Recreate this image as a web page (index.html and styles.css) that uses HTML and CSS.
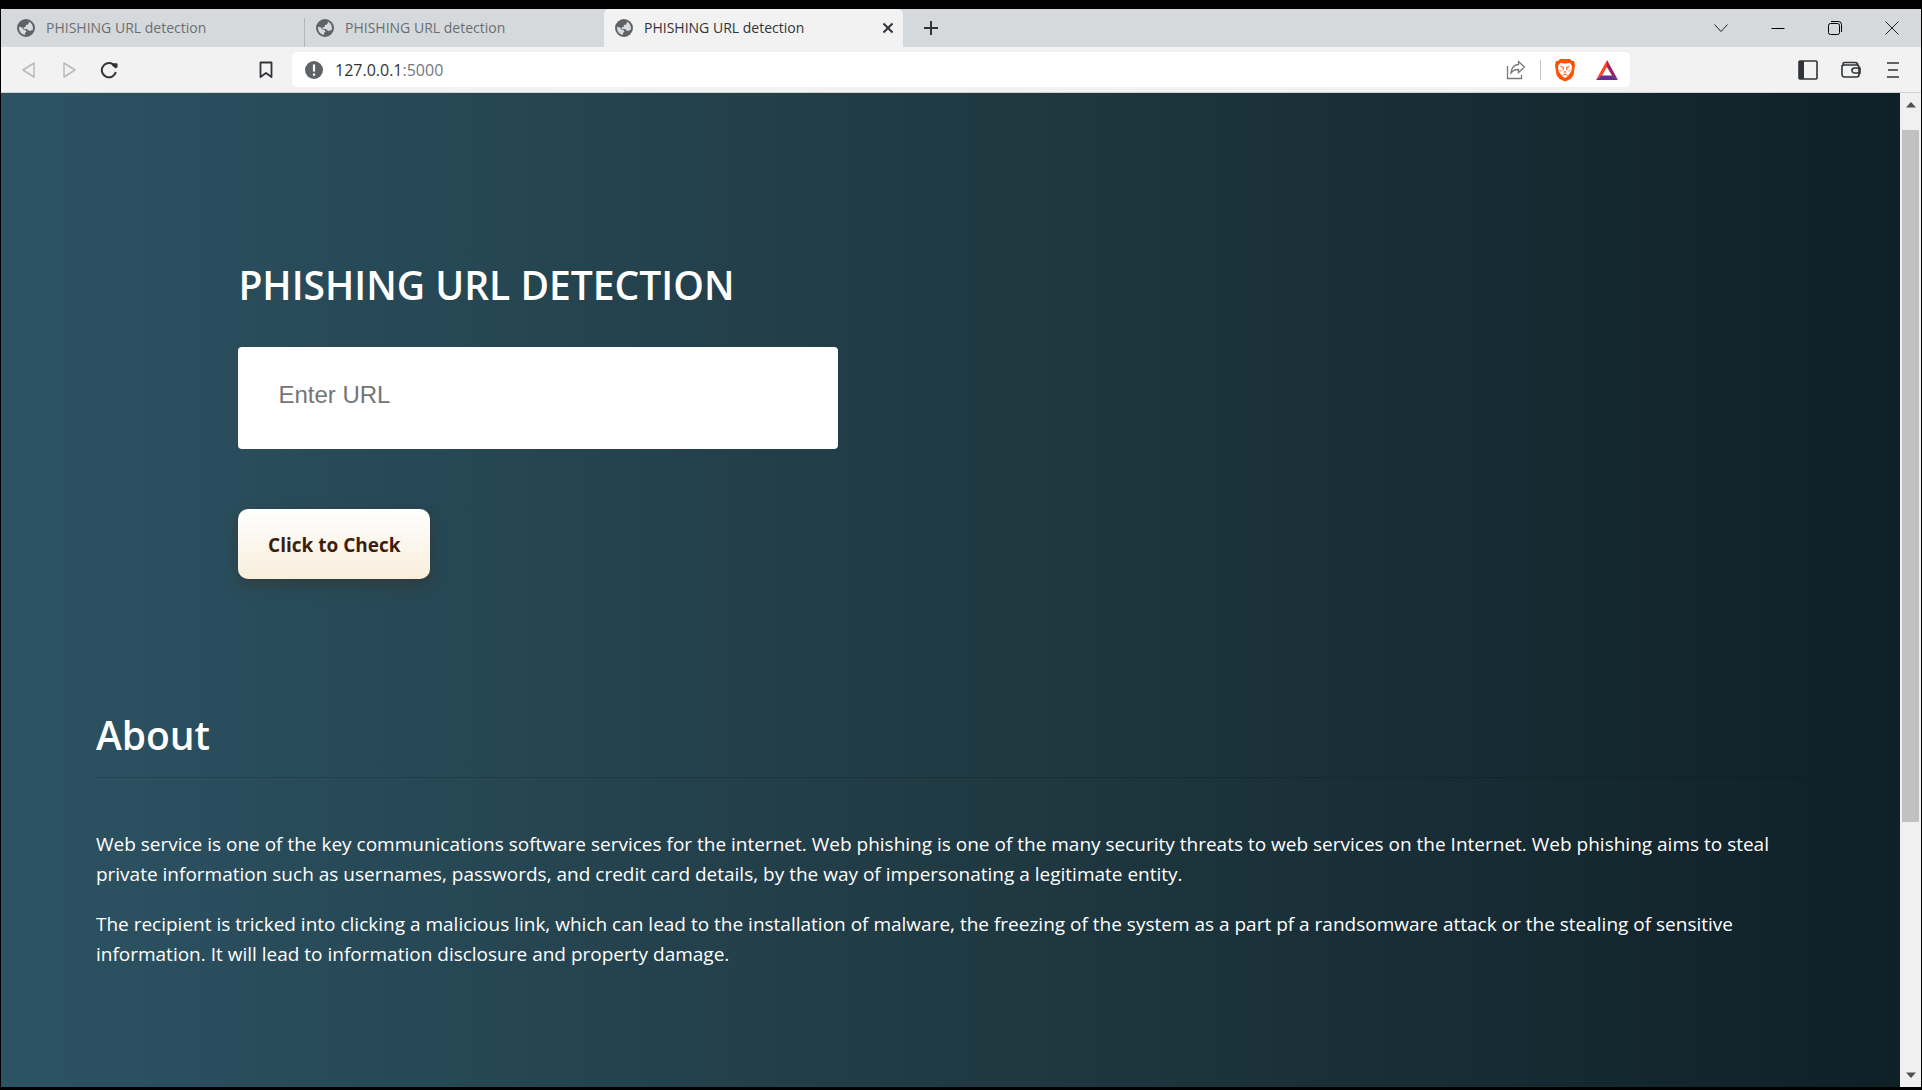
FILE: index.html
```html
<!DOCTYPE html>
<html lang="en">
<head>
<meta charset="utf-8">
<title>PHISHING URL detection</title>
<link rel="stylesheet" href="styles.css">
</head>
<body>
<svg width="0" height="0" class="defs" aria-hidden="true">
  <symbol id="globe" viewBox="0 0 18 18"><circle cx="9" cy="9" r="8" fill="#d9dcdf" stroke="#5f6368" stroke-width="2"/><path fill="#5f6368" d="M9 1h2.500l.5 2.500-1 2-2 .5-.5 2-2 .5.5 1.500h3l1.500 1.500L13 12l2-1 1.500.5-2 3.500L10 17l-2-.5V14l1.500-1.500-1-1.500-2-.5L5 8.500l-3.500-1L1 9l1 4 3 3-3-3-1-4 1.500-4.500L6 1.500z"/></symbol>
</svg>
<div class="window">
  <header>
    <nav class="tabs" aria-label="Tabs">
      <a class="tab" href="#"><svg class="favicon"><use href="#globe"/></svg>PHISHING URL detection</a>
      <a class="tab divided" href="#"><svg class="favicon"><use href="#globe"/></svg>PHISHING URL detection</a>
      <div class="tab active"><svg class="favicon"><use href="#globe"/></svg><a href="#">PHISHING URL detection</a>
        <button class="close" aria-label="Close tab"><svg width="12" height="12" viewBox="0 0 12 12"><path d="M1.500 1.500l9 9M10.500 1.500l-9 9" stroke="#303438" stroke-width="2"/></svg></button></div>
      <button class="new-tab" aria-label="New tab"><svg width="16" height="16" viewBox="0 0 16 16"><path d="M8 1v14M1 8h14" stroke="#303438" stroke-width="2"/></svg></button>
      <div class="controls">
        <button aria-label="Search tabs"><svg width="14" height="14" viewBox="0 0 14 14"><path d="M.5 3.500L7 10.500l6.500-7" fill="none" stroke="#222"/></svg></button>
        <button aria-label="Minimize"><svg width="14" height="14" viewBox="0 0 14 14"><path d="M.5 7.500h13" stroke="#000"/></svg></button>
        <button aria-label="Restore"><svg width="14" height="14" viewBox="0 0 14 14"><path d="M3 .5h7.500a3 3 0 0 1 3 3V11" fill="none" stroke="#000"/><rect x=".5" y="2.500" width="11" height="11" rx="2" fill="none" stroke="#000"/></svg></button>
        <button aria-label="Close"><svg width="14" height="14" viewBox="0 0 14 14"><path d="M.5.500l13 13M13.500.500l-13 13" stroke="#222"/></svg></button>
      </div>
    </nav>
    <div class="toolbar">
      <div class="nav-buttons">
        <button aria-label="Back"><svg width="18" height="18" viewBox="0 0 18 18"><path d="M14 2v14L3 9z" fill="none" stroke="#b8babc" stroke-width="1.500" stroke-linejoin="round"/></svg></button>
        <button aria-label="Forward"><svg width="18" height="18" viewBox="0 0 18 18"><path d="M4 2v14L15 9z" fill="none" stroke="#b8babc" stroke-width="1.500" stroke-linejoin="round"/></svg></button>
        <button aria-label="Reload"><svg width="18" height="18" viewBox="0 0 18 18"><path d="M15.800 11A7.100 7.100 0 1 1 13 3.400" fill="none" stroke="#303438" stroke-width="2"/><path d="M12 2.200h4.500a1 1 0 0 1 1 1v3l-2 1.300-3.500-3z" fill="#303438"/></svg></button>
      </div>
      <button class="bookmark" aria-label="Bookmark"><svg width="14" height="18" viewBox="0 0 14 18"><path d="M1.500 1.500h11v14.500L7 12l-5.500 4z" fill="none" stroke="#303438" stroke-width="1.800" stroke-linejoin="round"/></svg></button>
      <div class="address">
        <svg width="18" height="18" viewBox="0 0 18 18"><circle cx="9" cy="9" r="9" fill="#5f6368"/><path d="M9 3.500V10.500M9 12.500v2.200" stroke="#fff" stroke-width="2.200"/></svg>
        <a class="url" href="#">127.0.0.1<span>:5000</span></a>
        <button class="share" aria-label="Share"><svg width="20" height="20" viewBox="0 0 20 20"><path d="M1.500 6v12.500h14V15" fill="none" stroke="#777a7d" stroke-width="1.300"/><path d="M12.500 1.500l6 5.500-6 5.500V9.500C9 9.300 7 10.500 5 13c.3-4 2.500-8 7.500-8.500z" fill="none" stroke="#777a7d" stroke-width="1.300"/></svg></button>
        <button class="shields" aria-label="Brave Shields"><svg width="20" height="24" viewBox="0 0 20 24"><path fill="#ff5000" d="M5 1h10l2 2h2l1 4-1.500 10-3 4L10 23.500 4.500 21l-3-4L0 7l1-4h2z"/><path fill="#fff" d="M5 5l5 .5L15 5l2 3-.5 5-2 3-2 2.500L10 20l-2.500-1.500-2-2.500-2-3L3 8z"/><path fill="none" stroke="#ff5000" d="M5.500 8.500l3 .8-.5 3M14.500 8.500l-3 .8.500 3M8.500 14h3M7.500 17.500L10 16l2.500 1.500M4.500 12l1.500 1.500M15.500 12L14 13.500"/></svg></button>
        <button class="rewards" aria-label="Brave Rewards"><svg width="22" height="20" viewBox="0 0 22 20"><path d="M11 0v7L6 15.500 0 20z" fill="#ff4724"/><path d="M11 0l11 20-6-4.500L11 7z" fill="#9e1f63"/><path d="M0 20l5.500-4.500h11L22 20z" fill="#662d91"/></svg></button>
      </div>
      <div class="tools">
        <button aria-label="Sidebar"><svg width="20" height="20" viewBox="0 0 20 20"><rect x="1" y="1" width="18" height="18" rx="1" fill="none" stroke="#303438" stroke-width="1.600"/><path d="M1 1h5v18H1z" fill="#303438"/></svg></button>
        <button aria-label="Wallet"><svg width="20" height="20" viewBox="0 0 20 20"><path d="M2 6V4a1.500 1.500 0 0 1 1.500-1.500H14A3 3 0 0 1 17 5M1 5v9.500A2.500 2.500 0 0 0 3.500 17h12a2.500 2.500 0 0 0 2.500-2.500V7.500A2.500 2.500 0 0 0 15.500 5H2M19 8h-5.500a2.500 2.500 0 0 0 0 5H19z" fill="none" stroke="#303438" stroke-width="1.600"/></svg></button>
        <button aria-label="Menu"><svg width="12" height="18" viewBox="0 0 12 18"><path d="M0 2h12M1 9h10M0 16h12" stroke="#303438" stroke-width="1.600"/></svg></button>
      </div>
    </div>
  </header>
  <div class="viewport">
    <main>
      <form class="checker">
        <h1>PHISHING URL DETECTION</h1>
        <input type="text" aria-label="URL" placeholder="Enter URL">
        <button type="button">Click to Check</button>
      </form>
      <section class="about">
        <h2>About</h2>
        <hr>
        <p>Web service is one of the key communications software services for the internet. Web phishing is one of the many security threats to web services on the Internet. Web phishing aims to steal private information such as usernames, passwords, and credit card details, by the way of impersonating a legitimate entity.</p>
        <p>The recipient is tricked into clicking a malicious link, which can lead to the installation of malware, the freezing of the system as a part pf a randsomware attack or the stealing of sensitive information. It will lead to information disclosure and property damage.</p>
      </section>
    </main>
    <div class="scrollbar" aria-hidden="true">
      <svg width="10" height="6" viewBox="0 0 10 6"><path d="M0 5.500L5 0l5 5.500z" fill="#505050"/></svg>
      <div class="track"><div class="thumb"></div></div>
      <svg width="10" height="6" viewBox="0 0 10 6"><path d="M0 .5L5 6l5-5.500z" fill="#505050"/></svg>
    </div>
  </div>
</div>
</body>
</html>
```
FILE: styles.css
```css
* { box-sizing: border-box; }
body { margin: 0; background: #000; font-family: "Open Sans", "Noto Sans", sans-serif; }
button { border: 0; padding: 0; background: none; font: inherit; display: flex; align-items: center; justify-content: center; }
a { color: inherit; text-decoration: none; }
svg { flex: none; display: block; }
.defs { position: absolute; }

.window { min-height: 100vh; padding: 9px 1px 3px; display: flex; flex-direction: column; }

/* Tab strip */
.tabs { display: flex; height: 38px; background: #d5d9dc; }
.tab { width: 299px; display: flex; align-items: center; gap: 11px; padding: 0 11px 1px; font-size: 14px; color: #6b6e72; }
.tab:first-child { width: 304px; padding-left: 16px; }
.tab:first-child { background: linear-gradient(#b3b6b9, #b3b6b9) 100% 100% / 1px 29px no-repeat; }
.tab.active { background: #f2f2f2; color: #303438; border-radius: 5px 5px 0 0; padding-right: 9px; }
.favicon { width: 18px; height: 18px; }
.close { margin-left: auto; width: 12px; }
.new-tab { width: 56px; }
.controls { margin-left: auto; display: flex; padding-right: 1px; }
.controls button { width: 57px; }

/* Toolbar */
.toolbar { display: flex; align-items: center; height: 46px; background: #f2f2f2; border-bottom: 1px solid #d0d2d4; }
.nav-buttons { display: flex; width: 128px; padding-left: 8px; }
.nav-buttons button { width: 40px; }
.bookmark { margin-left: 110px; width: 53px; }
.address { flex: 1; height: 35px; display: flex; align-items: center; padding: 0 12px 0 13px; background: #fff; border-radius: 5px; }
.url { margin-left: 12px; font-size: 16px; color: #303438; }
.url span { color: #75787b; }
.share { margin-left: auto; padding-right: 14px; border-right: 1px solid #c4c6c8; }
.shields { margin-left: 14px; }
.rewards { margin-left: 21px; }
.tools { width: 291px; display: flex; justify-content: flex-end; align-items: center; gap: 23px; padding-right: 22px; }
.tools button:last-child { margin-left: 3px; }

/* Page */
.viewport { flex: 1; display: flex; }
main { flex: 1; background: linear-gradient(to left, #0f2027, #203a43, #2c5364); color: #fff; }
.checker { padding: 162px 12.5% 0; display: flex; flex-direction: column; align-items: flex-start; }
h1, h2 { margin: 0; font-size: 39px; line-height: 60px; font-weight: 600; }
.checker input { width: 600px; max-width: 100%; height: 102px; margin-top: 32px; padding: 34px 40px 40px; border: 0; border-radius: 4px; background: #fff; font: 24px "Liberation Sans", Arial, sans-serif; color: #222; }
.checker input::placeholder { color: #757575; }
.checker button { width: 192px; height: 70px; margin-top: 60px; padding-top: 2px; border-radius: 10px; background: linear-gradient(#fff, #f8eedb); color: #3d1d0b; font-size: 19px; font-weight: 700; box-shadow: 0 6px 16px rgba(61, 40, 20, .4); }
.about { padding: 126px 5% 90px; }
hr { margin: 12px 0 51px; border: 0; border-top: 1px solid rgba(0, 0, 0, .15); }
p { margin: 0 0 20px; font-size: 19px; line-height: 30px; }

.scrollbar { width: 21px; background: #f0f0f0; display: flex; flex-direction: column; align-items: center; padding: 9px 2px; }
.track { flex: 1; width: 100%; margin: 22px 0 20px; }
.thumb { height: 75%; background: #c1c1c1; }
```
